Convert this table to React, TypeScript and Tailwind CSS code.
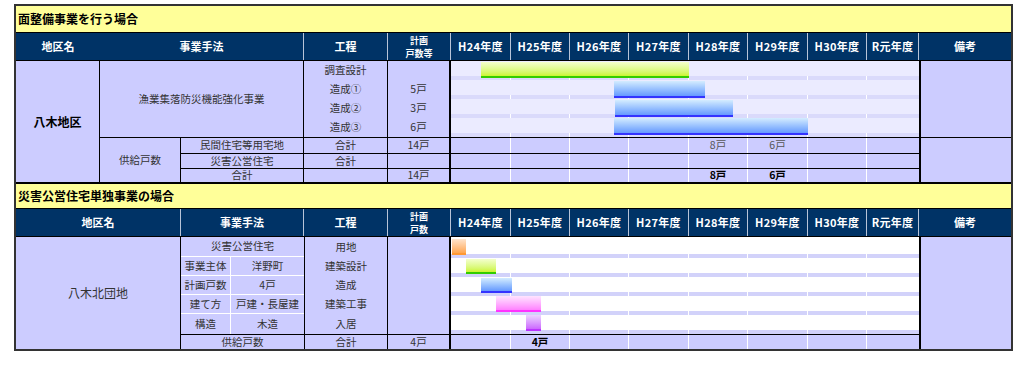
import React from "react";

const YEARS = ["H24年度", "H25年度", "H26年度", "H27年度", "H28年度", "H29年度", "H30年度", "R元年度"];

const GRID = "grid grid-cols-[84px_81px_50px_73px_84px_63px_60px_59px_59px_60px_59px_60px_59px_52px_92px]";
const GGRID = "grid grid-cols-[60px_59px_59px_60px_59px_60px_59px_52px]";

function HeadCell({ children, className = "" }: { children?: React.ReactNode; className?: string }) {
  return (
    <div className={"flex items-center justify-center text-center text-white font-bold text-[11px] leading-none border-r border-[#b8c4d8] " + className}>
      {children}
    </div>
  );
}

function Header({ second }: { second?: boolean }) {
  return (
    <div className={GRID + " h-[28px] bg-[#003366] border-b border-black"}>
      {second ? (
        <>
          <HeadCell className="col-span-2">地区名</HeadCell>
          <HeadCell className="col-span-2">事業手法</HeadCell>
        </>
      ) : (
        <>
          <HeadCell className="border-r-0">地区名</HeadCell>
          <HeadCell className="col-span-3">事業手法</HeadCell>
        </>
      )}
      <HeadCell>工程</HeadCell>
      <HeadCell className="flex-col">
        <span className="block text-[9px] leading-[13px]">計画</span>
        <span className="block text-[9px] leading-[13px]">{second ? "戸数" : "戸数等"}</span>
      </HeadCell>
      {YEARS.map((y) => (
        <HeadCell key={y} className="tracking-[0.3px]">{y}</HeadCell>
      ))}
      <HeadCell className="border-r-0">備考</HeadCell>
    </div>
  );
}

function GanttRow({ h, light, strip }: { h: string; light: string; strip: string }) {
  return (
    <div className={"flex flex-col " + h}>
      <div className={"flex-1 " + light} />
      <div className={GGRID + " h-[4px] bg-white"}>
        {YEARS.map((y, i) => (
          <div key={y} className={(i < 7 ? "border-r border-white " : "") + strip} />
        ))}
      </div>
    </div>
  );
}

function GanttTotals({ values, bold }: { values: Record<number, string>; bold?: boolean }) {
  return (
    <div className={GGRID + " h-full"}>
      {YEARS.map((y, i) => (
        <div
          key={y}
          className={
            "flex items-center justify-center bg-[#ccccff] text-[10.5px] leading-none " +
            (i < 7 ? "border-r border-white " : "") +
            (bold ? "font-bold text-black" : "text-[#555]")
          }
        >
          {values[i] ?? ""}
        </div>
      ))}
    </div>
  );
}

const cellBase = "flex items-center justify-center bg-[#ccccff] text-[10.5px] leading-none text-[#333]";

function Section1() {
  const koutei = ["調査設計", "造成①", "造成②", "造成③"];
  const keikaku = ["", "5戸", "3戸", "6戸"];
  const rs = ["row-start-1", "row-start-2", "row-start-3", "row-start-4"];
  return (
    <>
      <div className="h-[27px] bg-[#ffff99] border-b border-black flex items-center pl-[2px] text-[12px] font-bold text-black">
        面整備事業を行う場合
      </div>
      <Header />
      <div className={GRID + " grid-rows-[19px_19px_19px_19px_16px_15px_14px]"}>
        <div className={cellBase + " col-start-1 row-start-1 row-span-7 border-r border-black text-[12px] font-bold text-black"}>八木地区</div>
        <div className={cellBase + " col-start-2 col-span-3 row-start-1 row-span-4 border-r border-black"}>漁業集落防災機能強化事業</div>
        {koutei.map((k, i) => (
          <div key={k} className={cellBase + " col-start-5 border-r border-black " + rs[i]}>{k}</div>
        ))}
        {keikaku.map((k, i) => (
          <div key={i} className={cellBase + " col-start-6 border-r-2 border-black " + rs[i]}>{k}</div>
        ))}
        <div className="col-start-7 col-span-8 row-start-1 row-span-4 relative flex flex-col">
          {[0, 1, 2, 3].map((i) => (
            <GanttRow key={i} h="h-[19px]" light="bg-[#ebebff]" strip="bg-[#dadafb]" />
          ))}
          <div className="absolute left-[30px] top-[1px] w-[208px] h-[16px] bg-linear-to-b from-[#f4ffcc] to-[#ccf52a] border-b-2 border-[#33cc00]" />
          <div className="absolute left-[163px] top-[20px] w-[91px] h-[17px] bg-linear-to-b from-[#d4ecff] to-[#6699ff] border-b-2 border-[#3333ff]" />
          <div className="absolute left-[164px] top-[39px] w-[118px] h-[17px] bg-linear-to-b from-[#d4ecff] to-[#6699ff] border-b-2 border-[#3333ff]" />
          <div className="absolute left-[163px] top-[57px] w-[194px] h-[17px] bg-linear-to-b from-[#d4ecff] to-[#6699ff] border-b-2 border-[#3333ff]" />
        </div>
        <div className="col-start-15 row-start-1 row-span-4 bg-[#ccccff] border-l-2 border-black" />

        <div className={cellBase + " col-start-2 row-start-5 row-span-3 border-t border-r border-black"}>供給戸数</div>
        <div className={cellBase + " col-start-3 col-span-2 row-start-5 border-t border-r border-black"}>民間住宅等用宅地</div>
        <div className={cellBase + " col-start-3 col-span-2 row-start-6 border-t border-r border-black"}>災害公営住宅</div>
        <div className={cellBase + " col-start-3 col-span-2 row-start-7 border-t border-r border-black"}>合計</div>
        <div className={cellBase + " col-start-5 row-start-5 border-t border-r border-black"}>合計</div>
        <div className={cellBase + " col-start-5 row-start-6 border-t border-r border-black"}>合計</div>
        <div className={cellBase + " col-start-5 row-start-7 border-t border-r border-black"} />
        <div className={cellBase + " col-start-6 row-start-5 border-t border-r-2 border-black"}>14戸</div>
        <div className={cellBase + " col-start-6 row-start-6 border-t border-r-2 border-black"} />
        <div className={cellBase + " col-start-6 row-start-7 border-t border-r-2 border-black"}>14戸</div>
        <div className="col-start-7 col-span-8 row-start-5 border-t border-black">
          <GanttTotals values={{ 4: "8戸", 5: "6戸" }} />
        </div>
        <div className="col-start-7 col-span-8 row-start-6 border-t border-black">
          <GanttTotals values={{}} />
        </div>
        <div className="col-start-7 col-span-8 row-start-7 border-t border-black">
          <GanttTotals values={{ 4: "8戸", 5: "6戸" }} bold />
        </div>
        <div className="col-start-15 row-start-5 row-span-3 bg-[#ccccff] border-t border-l-2 border-black" />
      </div>
    </>
  );
}

function Section2() {
  const koutei = ["用地", "建築設計", "造成", "建築工事", "入居"];
  const rs = ["row-start-1", "row-start-2", "row-start-3", "row-start-4", "row-start-5"];
  const pairs: [string, string][] = [
    ["事業主体", "洋野町"],
    ["計画戸数", "4戸"],
    ["建て方", "戸建・長屋建"],
    ["構造", "木造"],
  ];
  return (
    <>
      <div className="h-[27px] bg-[#ffff99] border-t-2 border-b border-black flex items-center pl-[2px] text-[12px] font-bold text-black">
        災害公営住宅単独事業の場合
      </div>
      <Header second />
      <div className={GRID + " grid-rows-[20px_19px_19px_19px_20px_15px]"}>
        <div className={cellBase + " col-start-1 col-span-2 row-start-1 row-span-6 border-r border-black text-[12px]"}>八木北団地</div>
        <div className={cellBase + " col-start-3 col-span-2 row-start-1 border-b border-white"}>災害公営住宅</div>
        {pairs.map(([a, b], i) => (
          <React.Fragment key={a}>
            <div className={cellBase + " col-start-3 border-r border-white " + rs[i + 1] + (i < 3 ? " border-b" : "")}>{a}</div>
            <div className={cellBase + " col-start-4 border-white " + rs[i + 1] + (i < 3 ? " border-b" : "")}>{b}</div>
          </React.Fragment>
        ))}
        <div className={cellBase + " col-start-3 col-span-2 row-start-6 border-t border-black"}>供給戸数</div>
        {koutei.map((k, i) => (
          <div key={k} className={cellBase + " col-start-5 border-l border-r border-black " + rs[i]}>{k}</div>
        ))}
        <div className={cellBase + " col-start-5 row-start-6 border-t border-l border-r border-black"}>合計</div>
        <div className={cellBase + " col-start-6 row-start-1 row-span-5 border-r-2 border-black"} />
        <div className={cellBase + " col-start-6 row-start-6 border-t border-r-2 border-black"}>4戸</div>
        <div className="col-start-7 col-span-8 row-start-1 row-span-5 relative flex flex-col bg-white">
          <GanttRow h="h-[21px]" light="bg-white" strip="bg-[#d2d2fa]" />
          <GanttRow h="h-[19px]" light="bg-white" strip="bg-[#d2d2fa]" />
          <GanttRow h="h-[19px]" light="bg-white" strip="bg-[#d2d2fa]" />
          <GanttRow h="h-[19px]" light="bg-white" strip="bg-[#d2d2fa]" />
          <GanttRow h="h-[19px]" light="bg-white" strip="bg-[#d2d2fa]" />
          <div className="absolute left-[1px] top-[2px] w-[14px] h-[16px] bg-linear-to-b from-[#ffe4cc] to-[#ffa64d] border-b-2 border-[#ff9933]" />
          <div className="absolute left-[15px] top-[22px] w-[30px] h-[15px] bg-linear-to-b from-[#f4ffcc] to-[#ccf52a] border-b-2 border-[#33cc00]" />
          <div className="absolute left-[30px] top-[41px] w-[31px] h-[15px] bg-linear-to-b from-[#d4ecff] to-[#6699ff] border-b-2 border-[#3333ff]" />
          <div className="absolute left-[45px] top-[59px] w-[45px] h-[16px] bg-linear-to-b from-[#ffe4ff] to-[#ff80ff] border-b-2 border-[#ff33ff]" />
          <div className="absolute left-[75px] top-[78px] w-[15px] h-[16px] bg-linear-to-b from-[#ecd4ff] to-[#cc66ff] border-b-2 border-[#bb33ff]" />
        </div>
        <div className="col-start-7 col-span-8 row-start-6 border-t border-black">
          <GanttTotals values={{ 1: "4戸" }} bold />
        </div>
        <div className="col-start-15 row-start-1 row-span-6 bg-[#ccccff] border-l-2 border-black" />
      </div>
    </>
  );
}

export default function App() {
  return (
    <div className="w-[1029px] h-[365px] bg-white pt-[4px] pl-[14px] font-['Noto_Sans_CJK_JP',sans-serif]">
      <div className="w-[999px] border-2 border-[#333]">
        <Section1 />
        <Section2 />
      </div>
    </div>
  );
}
